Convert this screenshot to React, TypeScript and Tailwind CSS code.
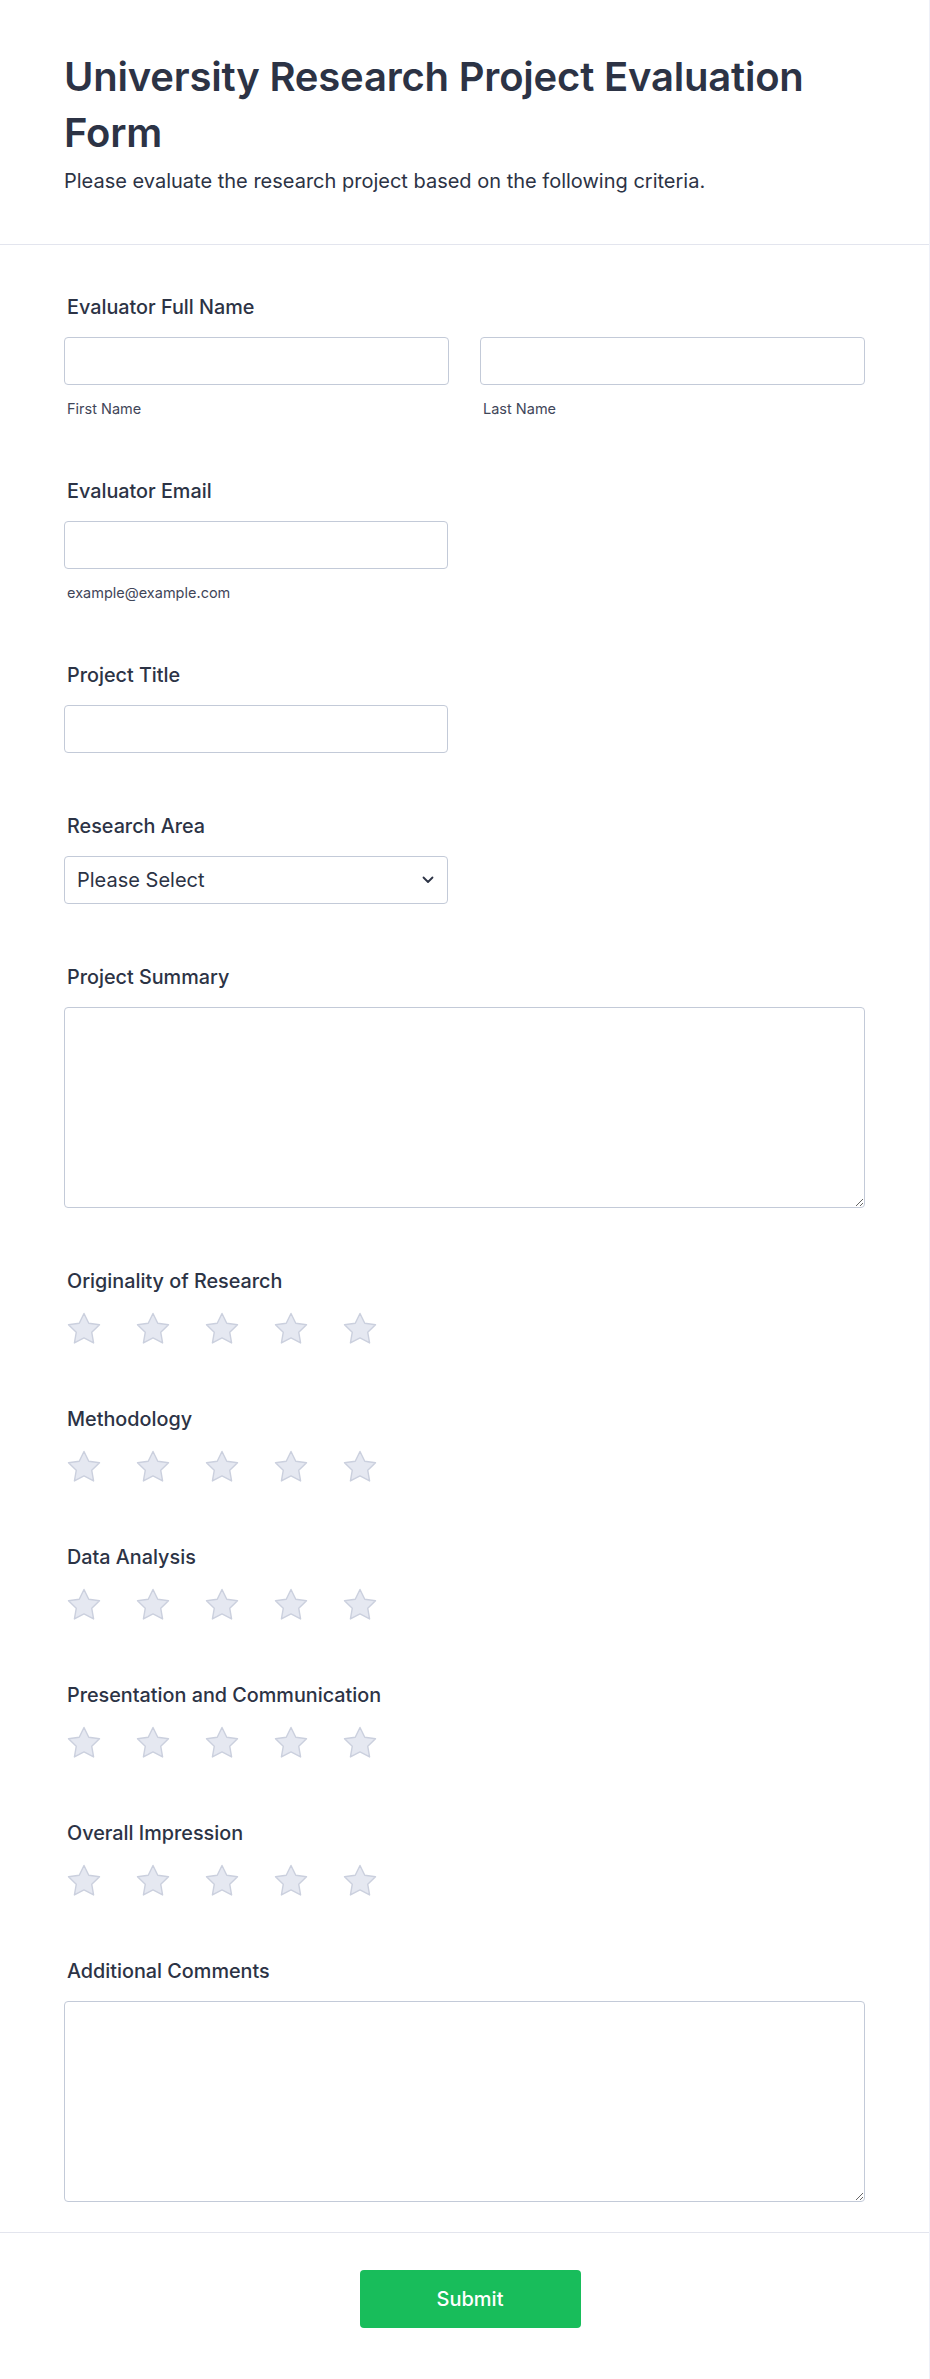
import React from "react";

const Star = () => (
  <svg width="38" height="36" viewBox="0 0 24 23" className="block">
    <path
      d="M12 1.6l3.05 6.2 6.85 1-4.95 4.82 1.17 6.8L12 17.2l-6.12 3.22 1.17-6.8L2.1 8.8l6.85-1z"
      fill="#e5e8f1"
      stroke="#cbd0de"
      strokeWidth="0.9"
      strokeLinejoin="round"
    />
  </svg>
);

const Label = ({ children }: { children: React.ReactNode }) => (
  <div className="text-[19.8px] leading-[24px] font-medium text-[#2c3345] pl-[3px] mb-[18px]">{children}</div>
);

const SubLabel = ({ children }: { children: React.ReactNode }) => (
  <div className="text-[14.5px] leading-[18px] text-[#3f4659] pl-[3px] mt-[15px]">{children}</div>
);

const inputCls =
  "block w-full h-[48px] rounded-[4px] border border-[#c3cad8] bg-white px-3 text-[20px] text-[#2c3345] outline-none";

const Rating = ({ label }: { label: string }) => (
  <div>
    <Label>{label}</Label>
    <div className="flex gap-[31px] h-[35px] pl-px">
      {[0, 1, 2, 3, 4].map((i) => (
        <Star key={i} />
      ))}
    </div>
  </div>
);

export default function App() {
  return (
    <div
      className="w-[930px] min-h-[2379px] bg-white border-r border-[#eef0f8]"
      style={{ fontFamily: "Inter, 'Noto Sans', sans-serif" }}
    >
      <div className="px-16 pt-[49px] pb-[49px]">
        <h1 className="text-[40px] leading-[56px] font-semibold text-[#2c3345] tracking-[-0.2px]">
          University Research Project Evaluation Form
        </h1>
        <p className="mt-[6px] text-[20px] leading-[28px] text-[#2c3345]">
          Please evaluate the research project based on the following criteria.
        </p>
      </div>
      <div className="h-px bg-[#e3e5ee]" />
      <div className="px-16 pt-[50px] pb-[30px] flex flex-col gap-[61px]">
        <div>
          <Label>Evaluator Full Name</Label>
          <div className="grid grid-cols-2 gap-[31px]">
            <div>
              <input className={inputCls} />
              <SubLabel>First Name</SubLabel>
            </div>
            <div>
              <input className={inputCls} />
              <SubLabel>Last Name</SubLabel>
            </div>
          </div>
        </div>
        <div>
          <Label>Evaluator Email</Label>
          <div className="w-[384px]">
            <input className={inputCls} />
            <SubLabel>example@example.com</SubLabel>
          </div>
        </div>
        <div>
          <Label>Project Title</Label>
          <div className="w-[384px]">
            <input className={inputCls} />
          </div>
        </div>
        <div>
          <Label>Research Area</Label>
          <div className="w-[384px] relative">
            <select className={inputCls + " appearance-none pl-[12px]"} defaultValue="">
              <option value="">Please Select</option>
            </select>
            <svg
              className="absolute right-[14px] top-1/2 -translate-y-1/2 pointer-events-none"
              width="12"
              height="8"
              viewBox="0 0 12 8"
            >
              <path d="M1.5 1.5L6 6l4.5-4.5" fill="none" stroke="#2c3345" strokeWidth="1.8" strokeLinecap="round" strokeLinejoin="round" />
            </svg>
          </div>
        </div>
        <div>
          <Label>Project Summary</Label>
          <textarea className="block w-full h-[201px] rounded-[4px] border border-[#c3cad8] bg-white p-3 outline-none" />
        </div>
        <Rating label="Originality of Research" />
        <Rating label="Methodology" />
        <Rating label="Data Analysis" />
        <Rating label="Presentation and Communication" />
        <Rating label="Overall Impression" />
        <div>
          <Label>Additional Comments</Label>
          <textarea className="block w-full h-[201px] rounded-[4px] border border-[#c3cad8] bg-white p-3 outline-none" />
        </div>
      </div>
      <div className="h-px bg-[#e3e5ee]" />
      <div className="flex justify-center pt-[37px] pb-[50px] pl-[11px]">
        <button className="w-[221px] h-[58px] rounded-[4px] bg-[#18bd5b] text-white text-[20px] font-medium">
          Submit
        </button>
      </div>
    </div>
  );
}
